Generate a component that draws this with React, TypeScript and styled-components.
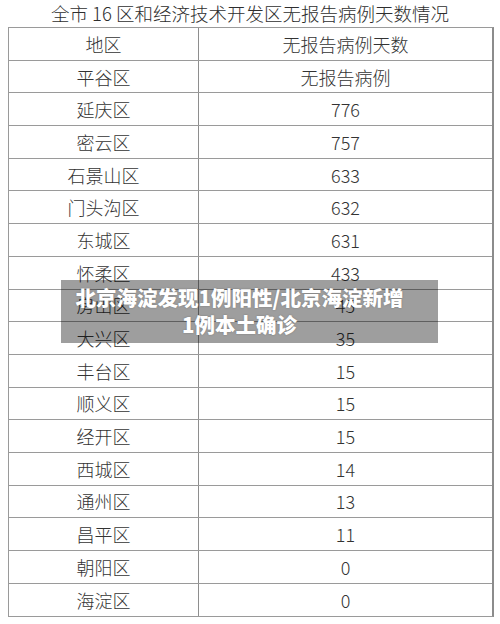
import React from "react";
import styled, { createGlobalStyle } from "styled-components";

const Global = createGlobalStyle`
  html, body { margin: 0; padding: 0; background: #fff; }
  body { font-family: "Noto Sans CJK SC", "Noto Sans", sans-serif; }
`;

const Page = styled.div`
  position: relative;
  width: 500px;
  height: 624px;
  background: #fff;
  overflow: hidden;
`;

const Title = styled.h1`
  margin: 0;
  height: 27px;
  font-size: 18.5px;
  font-weight: 300;
  line-height: 27px;
  color: #2e2e2e;
  text-align: center;
`;

const Table = styled.div`
  box-sizing: border-box;
  margin-left: 8px;
  width: 486px;
  border: 1px solid #9a9a9a;
  border-right: 2px solid #8c8c8c;
  border-bottom: 1.5px solid #9a9a9a;
`;

const Row = styled.div<{ $last?: boolean }>`
  display: grid;
  grid-template-columns: 190px 1fr;
  height: 32.7px;
  box-sizing: border-box;
  border-bottom: ${(p) => (p.$last ? "none" : "1px solid #9a9a9a")};
`;

const Cell = styled.div<{ $left?: boolean }>`
  display: flex;
  align-items: center;
  justify-content: center;
  font-size: 18px;
  color: #333;
  font-weight: 300;
  border-right: ${(p) => (p.$left ? "1.5px solid #8e8e8e" : "none")};
`;

const Banner = styled.div`
  position: absolute;
  left: 61px;
  top: 280px;
  width: 377px;
  height: 63px;
  box-sizing: border-box;
  padding: 4px 26px 0 6px;
  background: rgba(0, 0, 0, 0.38);
  color: #fff;
  font-size: 20.5px;
  font-weight: 900;
  line-height: 27px;
  text-align: center;
  text-shadow: 0 0 2px rgba(0, 0, 0, 0.25);
`;

const rows: [string, string][] = [
  ["平谷区", "无报告病例"],
  ["延庆区", "776"],
  ["密云区", "757"],
  ["石景山区", "633"],
  ["门头沟区", "632"],
  ["东城区", "631"],
  ["怀柔区", "433"],
  ["房山区", "45"],
  ["大兴区", "35"],
  ["丰台区", "15"],
  ["顺义区", "15"],
  ["经开区", "15"],
  ["西城区", "14"],
  ["通州区", "13"],
  ["昌平区", "11"],
  ["朝阳区", "0"],
  ["海淀区", "0"],
];

export default function App() {
  return (
    <Page>
      <Global />
      <Title>全市 16 区和经济技术开发区无报告病例天数情况</Title>
      <Table>
        <Row>
          <Cell $left>地区</Cell>
          <Cell>无报告病例天数</Cell>
        </Row>
        {rows.map(([a, b], i) => (
          <Row key={a} $last={i === rows.length - 1}>
            <Cell $left>{a}</Cell>
            <Cell>{b}</Cell>
          </Row>
        ))}
      </Table>
      <Banner>
        北京海淀发现1例阳性/北京海淀新增
        <br />
        1例本土确诊
      </Banner>
    </Page>
  );
}
